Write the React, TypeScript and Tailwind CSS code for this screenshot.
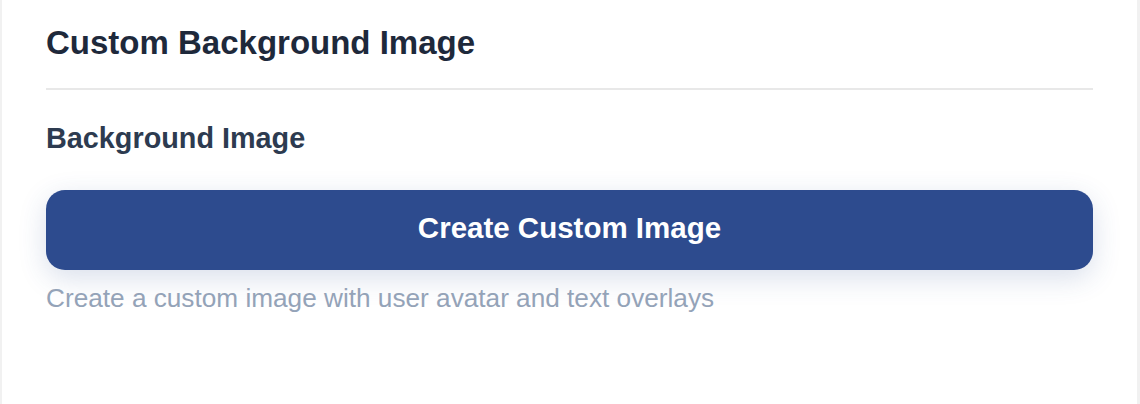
import React from "react";

export default function App() {
  return (
    <div className="min-h-[404px] bg-[#f1f1f1] pl-[2px] pr-[3px] font-['Liberation_Sans',Arial,sans-serif]">
      <div className="min-h-[404px] bg-white px-[44px] pt-[23px]">
        <div className="border-b-2 border-[#e8e8e8] pb-[25px]">
          <h2 className="text-[33px] leading-[40px] font-bold text-[#1e293b]">Custom Background Image</h2>
        </div>
        <h3 className="mt-[30px] text-[28.8px] leading-[36px] font-semibold text-[#2d3b50]">Background Image</h3>
        <button
          type="button"
          className="mt-[34px] flex h-[80px] w-full items-center justify-center rounded-[19px] bg-[#2d4b8e] pb-[3px] text-[29.5px] font-semibold text-white shadow-[0_8px_28px_rgba(45,75,142,0.18)]"
        >
          Create Custom Image
        </button>
        <p className="mt-[12px] text-[26.2px] leading-[32px] text-[#94a3b8]">
          Create a custom image with user avatar and text overlays
        </p>
      </div>
    </div>
  );
}
